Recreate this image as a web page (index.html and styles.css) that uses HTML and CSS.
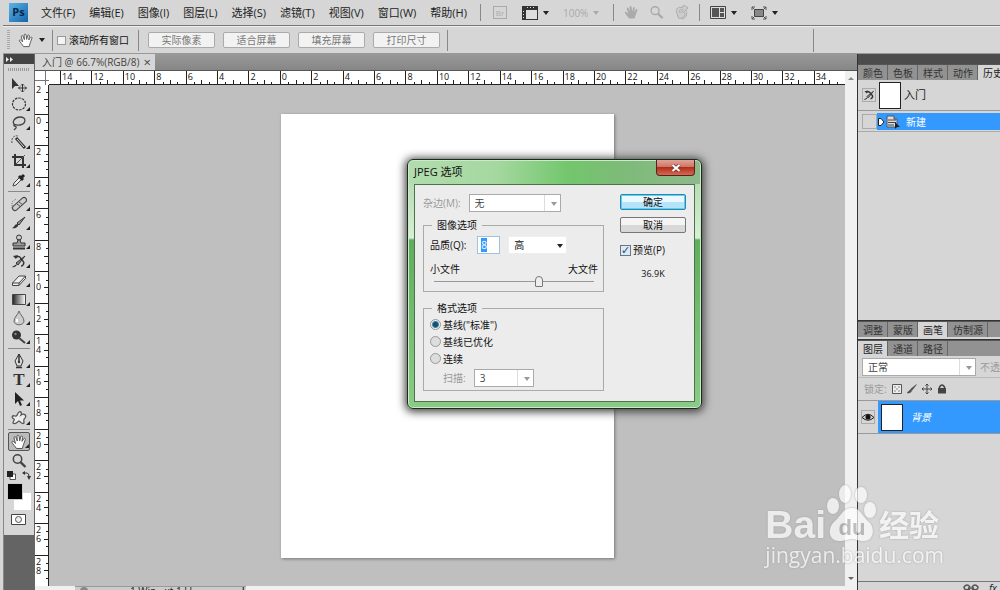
FILE: index.html
```html
<!DOCTYPE html>
<html lang="zh-CN">
<head>
    <meta charset="UTF-8">
    <meta name="viewport" content="width=device-width, initial-scale=1.0">
    <title>入门 @ 66.7%(RGB/8)</title>
    <link rel="stylesheet" href="styles.css">
</head>
<body>
    <!-- shared hand shape -->
    <svg width="0" height="0" class="defs">
        <symbol id="hand" viewBox="0 0 16 16">
            <path d="M5.5 14.5C4 12 2 10.500 1 8.500C.6 7.200 2 6.800 3 8L4.500 9.500L3 4C2.700 2.500 4.400 2.200 4.900 3.500L6.300 7L6 2.200C6 .8 7.900.8 8.100 2.200L8.700 6.800L9.700 2.800C10.100 1.500 11.700 1.900 11.500 3.200L11 7.400L12.700 4.800C13.500 3.700 14.800 4.500 14.300 5.700L12.500 10.500L11.300 14.500Z"/>
        </symbol>
        <symbol id="lens" viewBox="0 0 16 16">
            <circle cx="6.500" cy="6" r="4.200" fill="none" stroke="currentColor" stroke-width="1.500"/>
            <path d="M9.500 9.200L14.500 14" stroke="currentColor" stroke-width="2.400"/>
        </symbol>
    </svg>

    <header class="menu-bar">
        <span class="logo">Ps</span>
        <nav class="menus">
            <a href="#">文件(F)</a>
            <a href="#">编辑(E)</a>
            <a href="#">图像(I)</a>
            <a href="#">图层(L)</a>
            <a href="#">选择(S)</a>
            <a href="#">滤镜(T)</a>
            <a href="#">视图(V)</a>
            <a href="#">窗口(W)</a>
            <a href="#">帮助(H)</a>
        </nav>
        <div class="app-tools">
            <i class="divider"></i>
            <button class="bridge" disabled>Br</button>
            <button class="drop" aria-label="显示标尺">
                <svg width="16" height="14" viewBox="0 0 16 14"><path d="M0 0H16V14H0Z" fill="#333"/><path d="M4 4H15V13H4Z" fill="#ddd"/><path d="M5 1.500H14M1.500 5V12" stroke="#ddd" stroke-dasharray="1 2"/></svg>
            </button>
            <button class="drop faded" disabled>100%</button>
            <i class="divider"></i>
            <button class="faded" aria-label="抓手" disabled><svg width="15" height="15" fill="#aaa"><use href="#hand"/></svg></button>
            <button class="faded" aria-label="缩放" disabled><svg width="15" height="15"><use href="#lens"/></svg></button>
            <button class="faded" aria-label="旋转视图" disabled>
                <svg width="15" height="15" viewBox="0 0 16 16"><path d="M3 9C1 4 5 1 9 3L10 0L15 3L11 7L9 5C6 5 5 6 6 8L9 7L12 9C12 13 8 15 5 14Z" fill="#ccc" stroke="#aaa"/><path d="M13 6C15 11 12 14 8 15" fill="none" stroke="#aaa"/></svg>
            </button>
            <i class="divider"></i>
            <button class="drop" aria-label="排列文档">
                <svg width="16" height="13" viewBox="0 0 16 13"><path d="M.5.500H15.500V12.500H.5Z" fill="#ddd" stroke="#444"/><path d="M2 2H9V11H2ZM10 2H14V6H10ZM10 7H14V11H10Z" fill="#555"/></svg>
            </button>
            <button class="drop" aria-label="屏幕模式">
                <svg width="16" height="14" viewBox="0 0 16 14"><path d="M3.500 3.500H12.500V10.500H3.500Z" fill="#888" stroke="#444"/><path d="M1 4V1H4M12 1H15V4M15 10V13H12M4 13H1V10M1 1L3 3M15 1L13 3M15 13L13 11M1 13L3 11" fill="none" stroke="#555"/></svg>
            </button>
        </div>
    </header>

    <div class="options-bar">
        <i class="grip"></i>
        <button class="drop current" aria-label="抓手工具"><svg width="16" height="15" fill="#fff" stroke="#555"><use href="#hand"/></svg></button>
        <label class="scroll-all"><input type="checkbox">滚动所有窗口</label>
        <div class="view-buttons">
            <button>实际像素</button>
            <button>适合屏幕</button>
            <button>填充屏幕</button>
            <button>打印尺寸</button>
        </div>
    </div>

    <main class="workspace">
        <aside class="toolbox">
            <div class="toolbox-head">
                <svg width="8" height="5" viewBox="0 0 8 5"><path d="M0 0L3 2.500L0 5ZM4 0L7 2.500L4 5Z" fill="#eee"/></svg>
            </div>
            <i class="toolbox-grip"></i>
            <div class="tools">
                <button aria-label="移动"><svg viewBox="0 0 16 16"><path d="M1 1V12L4 9L8 9Z" fill="#333"/><path d="M11.500 7V15M7.500 11H15.500M10 8.500L11.500 7L13 8.500M10 13.500L11.500 15L13 13.500M9 9.500L7.500 11L9 12.500M14 9.500L15.500 11L14 12.500" fill="none" stroke="#333"/></svg></button>
                <button class="more" aria-label="选框"><svg viewBox="0 0 16 16"><ellipse cx="8" cy="8" rx="6.500" ry="6" fill="none" stroke="#333" stroke-width="1.200" stroke-dasharray="2.500 1"/></svg></button>
                <button class="more" aria-label="套索"><svg viewBox="0 0 16 16"><path d="M4 10C0 7 4 2 9 2C16 2 15 9 9 10C6 10.500 4 9 3 10C2 12 6 10 5 13L3 15" fill="none" stroke="#444" stroke-width="1.300"/></svg></button>
                <button class="more" aria-label="快速选择"><svg viewBox="0 0 16 16"><path d="M1 9C0 4 3 1 7 2" fill="none" stroke="#555" stroke-dasharray="2 1"/><path d="M5 4L14 14" stroke="#333" stroke-width="3"/><path d="M6 5L13 13" stroke="#ddd"/></svg></button>
                <button class="more" aria-label="裁剪"><svg viewBox="0 0 16 16"><path d="M4 1V12H15M1 4H12V15" fill="none" stroke="#333" stroke-width="2"/><path d="M5 11L14 2" stroke="#555"/></svg></button>
                <button class="more" aria-label="吸管"><svg viewBox="0 0 16 16"><path d="M2 14L3 11L9 5L11 7L5 13Z" fill="#eee" stroke="#444"/><path d="M8 4L12 8M10 6L13 3" stroke="#222" stroke-width="3"/></svg></button>
                <i class="rule"></i>
                <button class="more" aria-label="修复画笔"><svg viewBox="0 0 16 16"><path d="M4 12L13 4" stroke="#444" stroke-width="6" stroke-linecap="round"/><path d="M4 12L13 4" stroke="#ccc" stroke-width="4" stroke-linecap="round"/><path d="M6 8L10 11M8 6L12 9" stroke="#555"/><path d="M1 12V6L5 3" fill="none" stroke="#777" stroke-dasharray="1 1"/></svg></button>
                <button class="more" aria-label="画笔"><svg viewBox="0 0 16 16"><path d="M14 2L8 10L6 8Z" fill="#999" stroke="#333"/><path d="M7 9C8 12 4 14 1 13C4 12 3 9 7 9Z" fill="#333"/></svg></button>
                <button class="more" aria-label="图章"><svg viewBox="0 0 16 16"><circle cx="8" cy="3.500" r="2.500" fill="#ccc" stroke="#333"/><path d="M7 6H9L10 9H14V12H2V9H6Z" fill="#999" stroke="#333"/><path d="M2 14.500H14" stroke="#333" stroke-width="2"/></svg></button>
                <button class="more" aria-label="历史画笔"><svg viewBox="0 0 16 16"><path d="M14 3L7 12L5 10Z" fill="#888" stroke="#333"/><path d="M6 11C6 13 3 15 1 14ZM2 3L7 2L5 6Z" fill="#333"/><path d="M5 4C10 2 9 6 12 8C14 10 12 13 10 13" fill="none" stroke="#333" stroke-width="1.500"/></svg></button>
                <button class="more" aria-label="橡皮擦"><svg viewBox="0 0 16 16"><path d="M1.500 11L8 4H14.500L8 11ZM1.500 11V13.500H8V11M8 13.500L14.500 6.500V4" fill="#eee" stroke="#444"/></svg></button>
                <button class="more" aria-label="渐变"><svg viewBox="0 0 16 16"><defs><linearGradient id="grad"><stop stop-color="#222"/><stop offset="1" stop-color="#fff"/></linearGradient></defs><path d="M1.500 3.500H14.500V13.500H1.500Z" fill="url(#grad)" stroke="#444"/></svg></button>
                <button class="more" aria-label="模糊"><svg viewBox="0 0 16 16"><path d="M8 1C7 5 3 7 3 11C3 16 13 16 13 11C13 7 9 5 8 1Z" fill="#ccc" stroke="#666"/><path d="M6 9V12" stroke="#fff" stroke-width="2"/></svg></button>
                <button class="more" aria-label="减淡"><svg viewBox="0 0 16 16"><circle cx="5.500" cy="6" r="4.500" fill="#333"/><path d="M8 9L14 14" stroke="#444" stroke-width="2"/><circle cx="4.500" cy="5" r="1.200" fill="#888"/></svg></button>
                <i class="rule"></i>
                <button class="more" aria-label="钢笔"><svg viewBox="0 0 16 16"><path d="M8 1L4 8L6 13H10L12 8Z" fill="#ddd" stroke="#333"/><path d="M8 1V8M5 14.500H11" stroke="#333" stroke-width="1.500"/><circle cx="8" cy="9" r="1.200" fill="#333"/></svg></button>
                <button class="more type" aria-label="文字">T</button>
                <button class="more" aria-label="路径选择"><svg viewBox="0 0 16 16"><path d="M4 1V13L7 10L9 15L11 14L9 9.500H13Z" fill="#222"/></svg></button>
                <button class="more" aria-label="形状"><svg viewBox="0 0 16 16"><path d="M8 2C10 1 11 3 10 5C13 3 16 5 14 8C12 9 13 11 13 13C11 15 10 12 8 11C6 12 4 15 2 13C2 11 4 10 3 9C0 8 1 5 4 6C7 7 6 3 8 2Z" fill="#eee" stroke="#555" stroke-width="1.300"/></svg></button>
                <i class="rule"></i>
                <button class="more active" aria-label="抓手"><svg viewBox="0 0 16 16" fill="#fff" stroke="#555"><use href="#hand"/></svg></button>
                <button aria-label="缩放"><svg viewBox="0 0 16 16"><use href="#lens"/></svg></button>
            </div>
            <div class="swap">
                <svg width="9" height="9" viewBox="0 0 9 9"><path d="M3 3H8.500V8.500H3Z" fill="#fff" stroke="#555"/><path d="M0 0H6V6H0Z" fill="#222"/></svg>
                <svg width="9" height="9" viewBox="0 0 9 9"><path d="M2 2H5Q7 2 7 6" fill="none" stroke="#333"/><path d="M0 2L3 0V4ZM5 5H9L7 9Z" fill="#333"/></svg>
            </div>
            <div class="colors"><i class="foreground"></i></div>
            <button class="mask" aria-label="快速蒙版"><svg width="15" height="11" viewBox="0 0 15 11"><path d="M.5.500H14.500V10.500H.5Z" fill="#fff" stroke="#444"/><circle cx="7.500" cy="5.500" r="3" fill="#eee" stroke="#555"/></svg></button>
        </aside>

        <section class="document">
            <div class="doc-tabs">
                <div class="doc-tab">入门 @ 66.7%(RGB/8)<button aria-label="关闭">×</button></div>
            </div>
            <div class="doc-body">
                <div class="ruler-corner"></div>
                <div class="ruler-x" id="rulerX"></div>
                <div class="scrollbar"><i class="up"></i><i class="down"></i></div>
                <div class="ruler-y" id="rulerY"></div>
                <div class="canvas"><div class="paper"></div></div>
            </div>
            <div class="status-bar"><div class="status-task"><i></i><span>1 Win - xt 1 Ll</span><b>|</b></div></div>
        </section>

        <aside class="panels">
            <div class="panels-head"></div>
            <div class="panel history">
                <div class="panel-tabs">
                    <button>颜色</button><button>色板</button><button>样式</button><button>动作</button><button class="active">历史记录</button>
                </div>
                <div class="snapshot">
                    <span class="source"><svg width="12" height="12" viewBox="0 0 16 16"><path d="M14 3L7 12L5 10Z" fill="#888" stroke="#333"/><path d="M6 11C6 13 3 15 1 14ZM2 3L7 2L5 6Z" fill="#333"/><path d="M5 4C10 2 9 6 12 8C14 10 12 13 10 13" fill="none" stroke="#333" stroke-width="2"/></svg></span>
                    <i class="thumb"></i>
                    <span>入门</span>
                </div>
                <div class="state">
                    <i class="state-box"></i>
                    <div class="state-name">
                        <svg width="24" height="14" viewBox="0 0 24 14"><path d="M1.500 3.500H4L7 7L4 10.500H1.500Z" fill="#fff" stroke="#222"/><path d="M10 1H17V4H20V12H10Z" fill="#ddd" stroke="#555"/><path d="M11 5H19M11 7.500H19M11 10H17" stroke="#444"/><path d="M18 7V14L20 12H23Z" fill="#222"/></svg>
                        新建
                    </div>
                </div>
            </div>
            <div class="panel brushes">
                <div class="panel-tabs">
                    <button>调整</button><button>蒙版</button><button class="active">画笔</button><button>仿制源</button>
                </div>
            </div>
            <div class="panel layers">
                <div class="panel-tabs">
                    <button class="active">图层</button><button>通道</button><button>路径</button>
                </div>
                <div class="blend">
                    <span class="select muted"><select aria-label="混合模式"><option>正常</option></select></span>
                    <span class="opacity">不透明度:</span>
                </div>
                <div class="lock">
                    <span>锁定:</span>
                    <svg width="10" height="10" viewBox="0 0 10 10"><path d="M.5.500H9.500V9.500H.5Z" fill="#eee" stroke="#555"/><path d="M2 2H4V4H2ZM6 2H8V4H6ZM4 4H6V6H4ZM2 6H4V8H2ZM6 6H8V8H6Z" fill="#bbb"/></svg>
                    <svg width="10" height="10" viewBox="0 0 16 16"><path d="M15 1L8 10L6 8ZM7 9C8 13 4 15 0 14C4 12 3 9 7 9Z" fill="#555" stroke="#444"/></svg>
                    <svg width="10" height="10" viewBox="0 0 10 10"><path d="M5 0V10M0 5H10M3.500 1.500L5 0L6.500 1.500M3.500 8.500L5 10L6.500 8.500M1.500 3.500L0 5L1.500 6.500M8.500 3.500L10 5L8.500 6.500" fill="none" stroke="#444"/></svg>
                    <svg width="10" height="10" viewBox="0 0 10 10"><path d="M2.500 5V3Q5-1 7.500 3V5" fill="none" stroke="#444" stroke-width="1.500"/><path d="M1 4H9V9.500H1Z" fill="#444"/></svg>
                </div>
                <div class="layer">
                    <span class="eye"><svg width="12" height="9" viewBox="0 0 12 9"><path d="M0 4.500Q6-2 12 4.500Q6 10 0 4.500Z" fill="#ccc" stroke="#222"/><circle cx="6" cy="4" r="2.500" fill="#111"/></svg></span>
                    <div class="layer-name"><i class="thumb"></i><em>背景</em></div>
                </div>
                <div class="layers-foot">
                    <svg width="16" height="8" viewBox="0 0 16 8"><path d="M7 3Q4-1 1 3Q1 7 7 5M9 3Q12-1 15 3Q15 7 9 5M5 4H11" fill="none" stroke="#555" stroke-width="1.500"/></svg>
                    <i>fx</i>
                </div>
            </div>
        </aside>
    </main>

    <form class="dialog">
        <div class="dialog-title">JPEG 选项<button type="button" aria-label="关闭"><svg width="10" height="8" viewBox="0 0 10 8"><path d="M1.500 1L8.500 7M8.500 1L1.500 7" stroke="#733" stroke-width="3.500"/><path d="M1.500 1L8.500 7M8.500 1L1.500 7" stroke="#fff" stroke-width="2"/></svg></button></div>
        <div class="dialog-body">
            <div class="settings">
                <div class="matte">
                    <label for="matte">杂边(M):</label>
                    <span class="select muted"><select id="matte" disabled><option>无</option></select></span>
                </div>
                <fieldset class="image-options">
                    <legend>图像选项</legend>
                    <div class="quality">
                        <label for="quality">品质(Q):</label>
                        <span class="number"><input type="text" id="quality" value="8"></span>
                        <span class="select plain"><select aria-label="品质"><option>高</option></select></span>
                    </div>
                    <div class="ends"><span>小文件</span><span>大文件</span></div>
                    <input type="range" aria-label="文件大小" min="0" max="12" value="8">
                </fieldset>
                <fieldset class="format-options">
                    <legend>格式选项</legend>
                    <label><input type="radio" name="format" checked>基线("标准")</label>
                    <label><input type="radio" name="format">基线已优化</label>
                    <label><input type="radio" name="format">连续</label>
                    <div class="scans">
                        <label for="scans">扫描:</label>
                        <span class="select muted"><select id="scans" disabled><option>3</option></select></span>
                    </div>
                </fieldset>
            </div>
            <div class="actions">
                <button type="button" class="ok">确定</button>
                <button type="button">取消</button>
                <label><input type="checkbox" checked>预览(P)</label>
                <span class="size">36.9K</span>
            </div>
        </div>
    </form>

    <div class="watermark">
        <div class="brand">
            <span class="bai">Bai</span>
            <svg width="50" height="58" viewBox="0 0 50 58">
                <g fill="#fff">
                    <ellipse cx="7" cy="22" rx="6" ry="8"/>
                    <ellipse cx="19" cy="10" rx="6" ry="9"/>
                    <ellipse cx="35" cy="11" rx="6" ry="8"/>
                    <ellipse cx="44" cy="26" rx="6" ry="8"/>
                    <path d="M26 24C34 24 36 32 43 38C50 45 47 57 38 57C32 57 30 55 26 55C22 55 19 57 13 57C3 57 1 45 8 38C15 32 17 24 26 24Z"/>
                </g>
                <text x="26" y="51" text-anchor="middle" class="du">du</text>
            </svg>
            <span class="jing">经验</span>
        </div>
        <div class="site">jingyan.baidu.com</div>
    </div>

    <script>
        function addMarks(id, from, to) {
            const ruler = document.getElementById(id);
            for (let n = from; n <= to; n += 2) {
                const mark = document.createElement('span');
                mark.textContent = Math.abs(n);
                ruler.appendChild(mark);
            }
        }

        addMarks('rulerX', -14, 34);
        addMarks('rulerY', -2, 28);
        document.getElementById('quality').select();
    </script>
</body>
</html>
```

FILE: styles.css
```css
* {
    box-sizing: border-box;
}

body {
    margin: 0;
    height: 100vh;
    overflow: hidden;
    display: flex;
    flex-direction: column;
    position: relative;
    padding-left: 3px;
    background-color: #d6d6d6;
    color: #222;
    font-family: "Open Sans", "Noto Sans CJK SC", sans-serif;
    font-size: 10px;
    line-height: 14px;
}

button, input, select {
    font: inherit;
    color: inherit;
    margin: 0;
    padding: 0;
}

button {
    border: none;
    background: none;
}

svg, i {
    display: block;
    flex: none;
}

.defs {
    position: absolute;
}

/* top bars */
.menu-bar {
    display: flex;
    align-items: center;
    height: 26px;
    padding-left: 6px;
    border-bottom: 1px solid #777;
    font-size: 11px;
    white-space: nowrap;
}

.logo {
    width: 19px;
    height: 19px;
    background: linear-gradient(135deg, #5ab4e8, #1664a8);
    color: #06264a;
    font-weight: bold;
    font-size: 11px;
    line-height: 18px;
    text-align: center;
}

.menus {
    display: flex;
    gap: 14px;
    margin-left: 13px;
}

.menus a {
    color: #222;
    text-decoration: none;
}

.app-tools {
    display: flex;
    align-items: center;
    gap: 10px;
    margin-left: 13px;
}

.divider {
    width: 1px;
    height: 17px;
    background-color: #888;
}

.bridge {
    width: 14px;
    height: 13px;
    border: 1px solid #aaa;
    color: #aaa;
    font-size: 8px;
    line-height: 10px;
    margin: 0 5px 0 2px;
}

.drop {
    display: flex;
    align-items: center;
    gap: 5px;
    margin-right: 4px;
}

.drop::after, .select::after {
    content: "";
    border: 3px solid transparent;
    border-top: 4px solid #222;
    border-bottom: none;
}

.faded {
    color: #aaa;
    font-size: 10px;
}

.faded::after {
    border-top-color: #aaa;
}

.options-bar {
    display: flex;
    align-items: center;
    height: 28px;
    padding-left: 4px;
    border-top: 1px solid #eee;
    border-bottom: 1px solid #999;
}

.grip {
    width: 3px;
    height: 20px;
    background: repeating-linear-gradient(#aaa 0 1px, transparent 1px 2px);
}

.current {
    margin: 0 7px 0 8px;
}

.scroll-all {
    display: flex;
    align-items: center;
    gap: 3px;
    height: 21px;
    padding: 0 9px 0 4px;
    border-left: 1px solid #888;
    border-right: 1px solid #888;
    color: #111;
}

input[type="checkbox"] {
    appearance: none;
    width: 9px;
    height: 9px;
    border: 1px solid #999;
    background-color: #f4f4f4;
}

.view-buttons {
    display: flex;
    gap: 8px;
    height: 21px;
    align-items: center;
    padding: 0 7px 0 9px;
    border-right: 1px solid #888;
}

.view-buttons button {
    width: 67px;
    height: 16px;
    border: 1px solid #aaa;
    border-radius: 2px;
    background-color: #f2f2f2;
    color: #777;
    line-height: 13px;
}

.options-bar::after {
    content: "";
    height: 23px;
    border-left: 1px solid #888;
    margin: 0 186px 0 auto;
}

.workspace {
    flex: 1;
    min-height: 0;
    display: grid;
    grid-template-columns: 32px 1fr 143px;
}

/* toolbox */
.toolbox {
    background: linear-gradient(#d6d6d6 0 481px, #646464 481px);
    border-left: 1px solid #888;
    border-right: 1px solid #666;
}

.toolbox-head {
    height: 10px;
    padding: 3px 2px;
    background-color: #444;
}

.toolbox-grip {
    height: 3px;
    margin: 4px;
    background: repeating-linear-gradient(90deg, #999 0 1px, transparent 1px 2px);
}

.tools {
    display: flex;
    flex-direction: column;
    padding: 0 4px;
}

.tools button {
    height: 19px;
    position: relative;
    display: flex;
    justify-content: center;
    align-items: center;
    color: #444;
}

.tools svg {
    width: 16px;
    height: 16px;
}

.tools .more::after {
    content: "";
    position: absolute;
    right: 0;
    bottom: 2px;
    border: 2px solid #222;
    border-top-color: transparent;
    border-left-color: transparent;
}

.tools .active {
    border: 1px solid #555;
    border-radius: 2px;
    background-color: #bbb;
}

.tools .type {
    font-family: "Liberation Serif", serif;
    font-weight: bold;
    font-size: 17px;
    color: #333;
}

.rule {
    height: 1px;
    margin: 2px 0;
    background-color: #888;
}

.swap {
    display: flex;
    justify-content: space-between;
    padding: 1px 3px;
}

.colors {
    width: 24px;
    height: 27px;
    margin: 2px 3px;
    background: linear-gradient(#fff, #fff) right bottom / 17px 17px no-repeat;
}

.foreground {
    width: 16px;
    height: 17px;
    background-color: #000;
    border: 1px solid #ccc;
}

.mask {
    display: block;
    margin: 4px 7px;
}

/* document */
.document {
    display: flex;
    flex-direction: column;
    min-width: 0;
}

.doc-tabs {
    height: 17px;
    background: linear-gradient(#999, #868686);
    border-bottom: 1px solid #555;
}

.doc-tab {
    display: inline-flex;
    height: 16px;
    align-items: center;
    gap: 4px;
    padding: 0 4px 0 7px;
    background-color: #d6d6d6;
    color: #444;
    font-size: 10px;
}

.doc-tab button {
    font-size: 13px;
}

.doc-body {
    flex: 1;
    min-height: 0;
    display: grid;
    grid-template: 14px 1fr / 14px 1fr 12px;
}

.ruler-corner {
    background: linear-gradient(#777, #777) 10px 0 / 1px 100% no-repeat, linear-gradient(#777, #777) 0 9px / 100% 1px no-repeat, #fff;
}

.ruler-x, .ruler-y {
    display: flex;
    background-color: #fff;
    font-size: 9px;
    line-height: 9px;
    color: #111;
}

.ruler-x {
    padding-left: 11px;
    border-bottom: 1px solid #222;
}

.ruler-x span {
    flex: 1;
    border-left: 1px solid #222;
    padding: 1px 0 0 1px;
    background:
        linear-gradient(#222, #222) 25% 100% / 1px 2px,
        linear-gradient(#222, #222) 50% 100% / 1px 4px,
        linear-gradient(#222, #222) 75% 100% / 1px 2px;
    background-repeat: no-repeat;
}

.ruler-y {
    flex-direction: column;
    border-right: 1px solid #222;
}

.ruler-y span {
    flex: 1;
    border-top: 1px solid #222;
    padding: 1px 6px 0 1px;
    word-break: break-all;
    background:
        linear-gradient(#222, #222) 100% 25% / 2px 1px,
        linear-gradient(#222, #222) 100% 50% / 4px 1px,
        linear-gradient(#222, #222) 100% 75% / 2px 1px;
    background-repeat: no-repeat;
}

.ruler-y span:first-child {
    flex: 0 0 29px;
    border-top: none;
    padding-top: 0;
}

.scrollbar {
    grid-column: 3;
    grid-row: 1 / 3;
    display: flex;
    flex-direction: column;
    justify-content: space-between;
    align-items: center;
    padding: 6px 0;
    background-color: #f0f0f0;
}

.up, .down {
    border: 3px solid transparent;
}

.up {
    border-top: none;
    border-bottom-color: #888;
}

.down {
    border-bottom: none;
    border-top-color: #666;
}

.canvas {
    display: flex;
    justify-content: center;
    align-items: center;
    background-color: #bfbfbf;
}

.paper {
    width: 333px;
    height: 444px;
    background-color: #fff;
    box-shadow: 1px 1px 3px #777;
}

.status-bar {
    height: 4px;
    overflow: hidden;
    padding-left: 40px;
    background-color: #f0f0f0;
}

.status-task {
    display: flex;
    gap: 42px;
    width: 171px;
    padding-left: 5px;
    background-color: #ccc;
    border-top: 1px solid #999;
    line-height: 8px;
    white-space: nowrap;
}

.status-task i {
    width: 8px;
    height: 8px;
    border-radius: 4px;
    background-color: #888;
}

.status-task span {
    flex: 1;
}

/* right panels */
.panels {
    display: flex;
    flex-direction: column;
    min-width: 0;
    overflow: hidden;
    border-left: 1px solid #333;
}

.panels-head {
    height: 10px;
    background-color: #4c4c4c;
}

.panel-tabs {
    display: flex;
    height: 16px;
    border-top: 1px solid #555;
    background-color: #929292;
    overflow: hidden;
}

.panel-tabs button {
    flex: none;
    padding: 0 4px 0 5px;
    border-right: 1px solid #666;
    color: #333;
    line-height: 14px;
}

.panel-tabs .active {
    background-color: #d6d6d6;
    color: #222;
}

.history {
    height: 256px;
}

.snapshot {
    display: flex;
    align-items: center;
    gap: 3px;
    height: 31px;
    padding-left: 4px;
    border-bottom: 1px solid #999;
    font-size: 11px;
}

.source, .eye {
    width: 14px;
    height: 14px;
    display: flex;
    align-items: center;
    justify-content: center;
    border: 1px solid #aaa;
}

.thumb {
    width: 22px;
    height: 27px;
    border: 1px solid #222;
    background-color: #fff;
}

.state {
    display: flex;
    height: 21px;
    padding: 2px 0 1px 4px;
    border-bottom: 1px solid #aaa;
}

.state-box {
    width: 15px;
    margin: 1px 0;
    border: 1px solid #aaa;
}

.state-name {
    flex: 1;
    display: flex;
    align-items: center;
    gap: 5px;
    background-color: #3399ff;
    color: #fff;
}

.brushes {
    border-top: 1px solid #333;
    padding-bottom: 2px;
}

.layers {
    flex: 1;
    display: flex;
    flex-direction: column;
    border-top: 1px solid #333;
}

.blend {
    display: flex;
    gap: 4px;
    padding: 2px 0 1px 4px;
    border-bottom: 1px solid #bbb;
    white-space: nowrap;
}

.blend .select {
    flex: none;
    width: 114px;
}

.opacity, .lock span {
    color: #999;
}

.opacity {
    line-height: 18px;
}

.lock {
    display: flex;
    align-items: center;
    gap: 5px;
    height: 22px;
    padding-left: 6px;
}

.layer {
    display: flex;
    align-items: center;
    height: 34px;
    border-top: 1px solid #999;
    border-bottom: 1px solid #999;
    padding-left: 3px;
}

.layer-name {
    flex: 1;
    height: 32px;
    display: flex;
    align-items: center;
    gap: 8px;
    margin-left: 3px;
    padding-left: 3px;
    background-color: #3399ff;
    color: #fff;
}

.layers-foot {
    display: flex;
    gap: 10px;
    margin-top: auto;
    height: 9px;
    padding: 2px 0 0 105px;
    border-top: 1px solid #777;
    line-height: 8px;
}

/* drop-downs */
.select {
    position: relative;
    display: block;
    height: 18px;
}

.select::after {
    position: absolute;
    right: 4px;
    top: 8px;
}

.select select {
    appearance: none;
    width: 100%;
    height: 100%;
    padding-left: 5px;
    border: 1px solid #aaa;
    border-radius: 0;
    background-color: #fff;
    color: #444;
    opacity: 1;
}

.muted::after {
    border-top-color: #999;
}

.muted select {
    background: linear-gradient(#ddd, #ddd) right 15px center / 1px 100% no-repeat #fff;
}

.plain select {
    border-color: #eee;
    color: #111;
}

/* JPEG dialog */
.dialog {
    position: absolute;
    left: 407px;
    top: 159px;
    width: 295px;
    padding: 0 6px 6px;
    border: 1px solid #1c2c1c;
    border-radius: 6px;
    background: linear-gradient(90deg, #b2dcae, #a5d8a0 30%, #72c66c 55%, #7dbb78 72%, #8fb98c) top / 100% 24px no-repeat, linear-gradient(#a9d5a5 0, #d8efd6 78px, #5fae5d 80px, #8bcb87);
    box-shadow: inset 0 0 0 1px #c9ecc6, 0 1px 8px 2px #444;
    color: #111;
}

.dialog-title {
    display: flex;
    height: 24px;
    align-items: center;
    justify-content: space-between;
    font-size: 11px;
}

.dialog-title button {
    align-self: flex-start;
    display: flex;
    width: 39px;
    height: 16px;
    justify-content: center;
    align-items: center;
    border: 1px solid #522;
    border-top: none;
    border-radius: 0 0 4px 4px;
    background: linear-gradient(#e0a498, #d07565 45%, #b02f1c 50%, #d66a50);
}

.dialog-body {
    display: flex;
    gap: 16px;
    padding: 9px 8px 10px;
    border: 1px solid #4b7549;
    background-color: #ececec;
}

.settings {
    flex: 1;
}

.matte, .quality, .scans {
    display: flex;
    align-items: center;
}

.matte {
    gap: 8px;
    color: #999;
}

.matte .select {
    width: 92px;
}

fieldset {
    min-width: 0;
    margin: 6px 0 0;
    padding: 4px 5px 4px 6px;
    border: 1px solid #aaa;
}

legend {
    margin-left: 2px;
    padding: 0 5px;
}

.quality {
    gap: 8px;
}

.number {
    margin-left: 3px;
}

.number input {
    display: block;
    width: 23px;
    height: 18px;
    padding-left: 3px;
    border: 1px solid #9cc4e0;
    background-color: #fff;
    outline: none;
}

.number input::selection {
    background-color: #3399ff;
    color: #fff;
}

.quality .select {
    width: 59px;
}

.ends {
    display: flex;
    justify-content: space-between;
    margin-top: 8px;
}

input[type="range"] {
    appearance: none;
    display: block;
    width: auto;
    min-width: 160px;
    height: 11px;
    margin: 0 4px;
    background: linear-gradient(#999, #999) center / 100% 1px no-repeat;
}

input[type="range"]::-webkit-slider-thumb {
    appearance: none;
    width: 8px;
    height: 11px;
    border: 1px solid #777;
    border-radius: 4px 4px 1px 1px;
    background-color: #eee;
}

.format-options {
    margin-top: 9px;
    padding-top: 1px;
    padding-bottom: 3px;
}

.format-options > label {
    display: flex;
    align-items: center;
    gap: 2px;
    height: 17px;
}

input[type="radio"] {
    appearance: none;
    width: 11px;
    height: 11px;
    border: 1px solid #999;
    border-radius: 50%;
    background-color: #ddd;
}

input[type="radio"]:checked {
    background: radial-gradient(#17506f 0 2px, #3b83a8 3px, #eee 4px);
}

.scans {
    gap: 8px;
    margin: 2px 0 0 13px;
    color: #999;
}

.scans .select {
    width: 60px;
}

.actions {
    width: 68px;
    display: flex;
    flex-direction: column;
    align-items: center;
    gap: 7px;
}

.actions button {
    width: 100%;
    height: 16px;
    border: 1px solid #777;
    border-radius: 2px;
    background: linear-gradient(#f4f4f4 50%, #d8d8d8 50%);
    line-height: 13px;
}

.actions .ok {
    border-color: #2a86ac;
    background: linear-gradient(#eaf8ff 50%, #b5e4fa 50%);
    box-shadow: inset 0 0 0 1px #5fd0f5;
}

.actions label {
    display: flex;
    align-items: center;
    gap: 2px;
    align-self: flex-start;
    margin-top: 3px;
}

.actions input {
    width: 11px;
    height: 11px;
}

.actions input:checked {
    border-color: #678;
    background: #dde9f2;
}

.actions input:checked::before {
    content: "✓";
    display: block;
    font: bold 11px/9px "DejaVu Sans", sans-serif;
    color: #234a80;
}

.size {
    margin-top: 3px;
    font-size: 9px;
}

/* watermark */
.watermark {
    position: absolute;
    right: 56px;
    bottom: 22px;
    color: #fff;
    opacity: 0.7;
    filter: drop-shadow(0 0 1px #999);
}

.brand {
    display: flex;
    align-items: flex-end;
    line-height: 34px;
}

.bai {
    font-family: "Liberation Sans", sans-serif;
    font-weight: bold;
    font-size: 39px;
}

.du {
    font: bold 22px "Liberation Sans", sans-serif;
    fill: #aaa;
}

.jing {
    margin-left: 3px;
    font-weight: bold;
    font-size: 30px;
}

.site {
    font-size: 21px;
    line-height: 26px;
}
```
